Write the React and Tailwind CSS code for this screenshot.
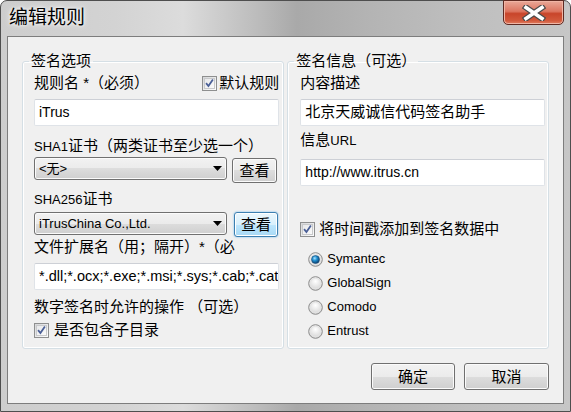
import React from 'react';
import clsx from 'clsx';

const FONT = "font-['Liberation_Sans','Noto_Sans_CJK_SC',sans-serif]";

const Button = ({ children, focused, className }) => (
    <div
        className={clsx(
            "flex items-center justify-center rounded-[3px] border text-[15px] leading-none text-black",
            focused
                ? "border-[#3c7fb1] bg-[linear-gradient(#eaf6fd,#d9f0fc_50%,#bee6fd_50%,#a7d9f5)] shadow-[inset_0_0_0_1px_#ffffff,0_0_2px_#62b6ee]"
                : "border-[#707070] bg-[linear-gradient(#f2f2f2,#ebebeb_50%,#dddddd_50%,#cfcfcf)] shadow-[inset_0_0_0_1px_#fbfbfb]",
            className
        )}
    >
        {children}
    </div>
);

const Combo = ({ value }) => (
    <div className="flex h-[23px] w-[193px] items-center rounded-[3px] border border-[#707070] bg-[linear-gradient(#f2f2f2,#ebebeb_50%,#dddddd_50%,#cfcfcf)] pl-[4px] pr-[4px] text-[13px] shadow-[inset_0_0_0_1px_#fbfbfb]">
        <span className="flex-1 truncate">{value}</span>
        <svg width="9" height="5" viewBox="0 0 9 5">
            <path d="M0 0h9L4.5 5z" fill="#000" />
        </svg>
    </div>
);

const TextBox = ({ children, className }) => (
    <div
        className={clsx(
            "flex h-[27px] items-center overflow-hidden whitespace-nowrap rounded-[2px] border border-[#dfe3e8] border-t-[#cdd0d6] bg-white pl-[4px]",
            className
        )}
    >
        {children}
    </div>
);

const Check = () => (
    <div className="flex h-[15px] w-[15px] shrink-0 items-center justify-center border border-[#8e8f8f] bg-[linear-gradient(135deg,#d6d7d9,#fdfdfd)] p-[1px]">
        <div className="flex h-full w-full items-center justify-center border border-[#c8c9cb] bg-[linear-gradient(135deg,#e8e9eb,#fafafa)]">
            <svg width="10" height="10" viewBox="0 0 10 10">
                <path d="M1.2 5.2L3.8 8.3L8.8 1.2" stroke="#4a5f97" strokeWidth="2" fill="none" />
            </svg>
        </div>
    </div>
);

const Radio = ({ checked }) => (
    <svg width="15" height="15" viewBox="0 0 15 15" className="shrink-0">
        <defs>
            <radialGradient id="rgray" cx="50%" cy="35%" r="65%">
                <stop offset="0%" stopColor="#ffffff" />
                <stop offset="100%" stopColor="#d2d2d2" />
            </radialGradient>
            <radialGradient id="rblue" cx="40%" cy="35%" r="65%">
                <stop offset="0%" stopColor="#aee3ff" />
                <stop offset="45%" stopColor="#1f8fd0" />
                <stop offset="100%" stopColor="#0b3f6e" />
            </radialGradient>
        </defs>
        <circle cx="7.5" cy="7.5" r="6.8" fill="url(#rgray)" stroke="#8c8c8c" strokeWidth="1" />
        <circle cx="7.5" cy="7.5" r="5.3" fill="none" stroke="#e4e4e4" strokeWidth="1" />
        {checked && <circle cx="7.5" cy="7.5" r="4" fill="url(#rblue)" stroke="#1b4e7a" strokeWidth="0.6" />}
    </svg>
);

const Group = ({ title, children, className, legendClass }) => (
    <fieldset className={clsx("h-[297px] rounded-[3px] border border-[#d5dfe5] shadow-[inset_0_0_0_1px_#ffffff]", className)}>
        <legend className={clsx("px-[2px] text-[15px] leading-[18px]", legendClass)}>{title}</legend>
        {children}
    </fieldset>
);

const Label = ({ children, className }) => (
    <div className={clsx("h-[18px] whitespace-nowrap text-[15px] leading-[18px]", className)}>{children}</div>
);

export default function App() {
    return (
        <div className={clsx("h-[412px] w-[571px] bg-white text-black", FONT)}>
            <div className="relative flex h-full flex-col rounded-t-[7px] border border-[#4e4e4e] bg-[linear-gradient(90deg,#cdcdcd_0%,#d3d3d3_20%,#dcdcdc_32%,#bcbcbc_45%,#a9a9a9_52%,#b4b4b4_65%,#bfbfbf_82%,#c6c6c6_100%)]">
                <div className="flex h-[35px] items-center pl-[8px] text-[19px] [text-shadow:0_0_6px_#ffffff,0_0_3px_#ffffff]">
                    编辑规则
                </div>

                {/* close button */}
                <div className="absolute right-[6px] top-[-1px] flex h-[25px] w-[61px] items-center justify-center rounded-b-[5px] border border-[#5f2a22] bg-[linear-gradient(#e9a898,#dc7560_45%,#c8452a_55%,#d2593c_85%,#e07e60)] shadow-[inset_0_0_0_1px_#f0b5a5]">
                    <svg width="26" height="16" viewBox="0 0 26 16">
                        <path d="M5 2.5L21 13.5M21 2.5L5 13.5" stroke="#4a4a4a" strokeWidth="6" strokeLinecap="square" />
                        <path d="M5 2.5L21 13.5M21 2.5L5 13.5" stroke="#ffffff" strokeWidth="3.6" strokeLinecap="square" />
                    </svg>
                </div>

                <div className="mx-[6px] mb-[7px] flex flex-1 flex-col border border-[#7d7d7d] bg-[#f0f0f0] px-[14px] pt-[15px]">
                    <div className="flex gap-[3px]">
                        <Group title="签名选项" className="w-[262px] pl-[11px] pr-[4px]" legendClass="-ml-[5px]">
                            <div className="flex h-[26px] items-center justify-between">
                                <span className="text-[15px]">规则名 *（必须）</span>
                                <div className="flex items-center gap-[2px]">
                                    <Check />
                                    <span className="text-[15px]">默认规则</span>
                                </div>
                            </div>
                            <TextBox className="mt-[3px] text-[14px]">iTrus</TextBox>
                            <Label className="mt-[11px]">
                                <span className="text-[13px]">SHA1</span>证书（两类证书至少选一个）
                            </Label>
                            <div className="mt-[2px] flex items-start gap-[5px]">
                                <Combo value="<无>" />
                                <Button className="mt-[1px] h-[25px] w-[45px]">查看</Button>
                            </div>
                            <Label className="mt-[7px]">
                                <span className="text-[13px]">SHA256</span>证书
                            </Label>
                            <div className="mt-[4px] flex items-start gap-[7px]">
                                <Combo value="iTrusChina Co.,Ltd." />
                                <Button focused className="h-[25px] w-[44px]">查看</Button>
                            </div>
                            <Label className="mt-[1px] overflow-hidden">文件扩展名（用；隔开）*（必</Label>
                            <TextBox className="mt-[7px] text-[14.5px]">*.dll;*.ocx;*.exe;*.msi;*.sys;*.cab;*.cat</TextBox>
                            <Label className="mt-[8px]">数字签名时允许的操作 （可选）</Label>
                            <div className="mt-[6px] flex h-[16px] items-center gap-[5px]">
                                <Check />
                                <span className="text-[15px]">是否包含子目录</span>
                            </div>
                        </Group>

                        <Group title="签名信息（可选）" className="w-[262px] pl-[12px] pr-[3px]" legendClass="-ml-[6px]">
                            <div className="flex h-[26px] items-center text-[15px]">内容描述</div>
                            <TextBox className="mt-[3px] text-[15px]">北京天威诚信代码签名助手</TextBox>
                            <Label className="mt-[5px]">
                                信息<span className="text-[13px]">URL</span>
                            </Label>
                            <TextBox className="mt-[10px] text-[14px]">http://www.itrus.cn</TextBox>
                            <div className="mt-[35px] flex h-[16px] items-center gap-[4px]">
                                <Check />
                                <span className="text-[15px]">将时间戳添加到签名数据中</span>
                            </div>
                            <div className="mt-[10px] flex flex-col pl-[8px]">
                                {[
                                    ['Symantec', true],
                                    ['GlobalSign', false],
                                    ['Comodo', false],
                                    ['Entrust', false],
                                ].map(([name, on]) => (
                                    <div key={name} className="flex h-[24px] items-center gap-[4px] text-[13px]">
                                        <Radio checked={on} />
                                        <span>{name}</span>
                                    </div>
                                ))}
                            </div>
                        </Group>
                    </div>

                    <div className="mt-[14px] flex justify-end gap-[9px]">
                        <Button className="h-[27px] w-[84px]">确定</Button>
                        <Button className="h-[27px] w-[85px]">取消</Button>
                    </div>
                </div>
            </div>
        </div>
    );
}
